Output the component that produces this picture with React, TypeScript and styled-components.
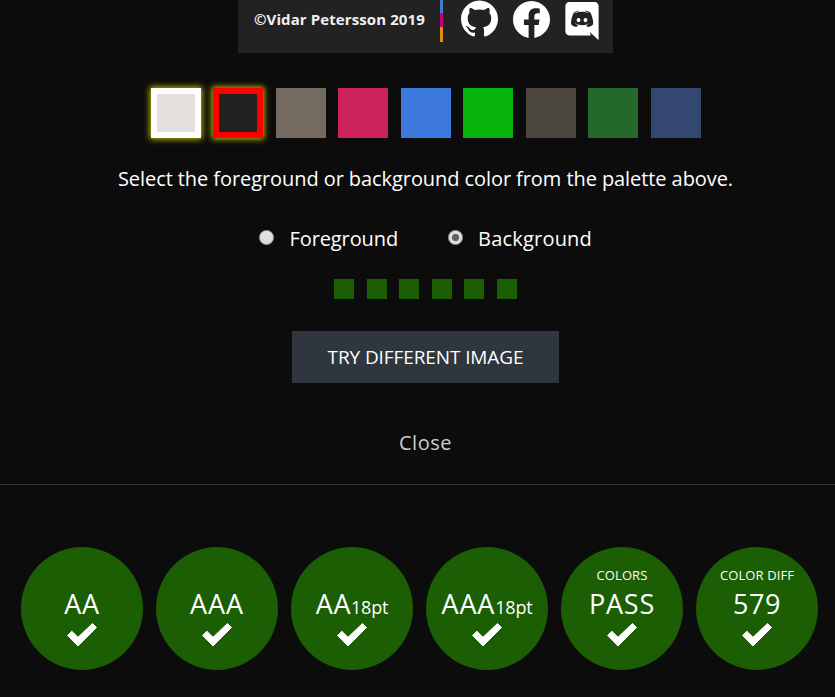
import React from "react";
import styled, { createGlobalStyle } from "styled-components";

const GlobalStyle = createGlobalStyle`
  * { box-sizing: border-box; }
  body {
    margin: 0;
    background: #0c0c0c;
    color: #fff;
    font-family: "Open Sans", "Noto Sans", sans-serif;
    overflow: hidden;
  }
`;

const Page = styled.main`
  width: 835px;
  height: 697px;
  overflow: hidden;
`;

const Panel = styled.section`
  width: 851px;
  height: 485px;
  display: flex;
  flex-direction: column;
  align-items: center;
  border-bottom: 1px solid #30373d;
`;

const Preview = styled.div`
  width: 375px;
  height: 53px;
  flex: none;
  display: flex;
  align-items: flex-start;
  padding-left: 16px;
  background: #222;
`;

const Copyright = styled.span`
  width: 186px;
  padding-top: 9px;
  font-size: 15px;
  line-height: 20px;
  font-weight: 700;
  letter-spacing: 0.1px;
  white-space: nowrap;
  color: #f0f0f0;
`;

const Stripe = styled.div`
  width: 3px;
  height: 42px;
  margin-right: 18px;
  background: linear-gradient(#4478c8 0 13px, #c9006b 13px 27px, #dc910c 27px);
`;

const SocialIcon = styled.svg<{ $w: number; $h: number; $top: number; $gap: number }>`
  width: ${(p) => p.$w}px;
  height: ${(p) => p.$h}px;
  margin: ${(p) => p.$top}px ${(p) => p.$gap}px 0 0;
  flex: none;
  fill: #fff;
`;

const Palette = styled.div`
  display: flex;
  gap: 12.5px;
  margin-top: 35px;
`;

const Swatch = styled.button<{ $color: string; $ring?: string }>`
  width: 50px;
  height: 50px;
  padding: 0;
  background: ${(p) => p.$color};
  border: ${(p) => (p.$ring ? `6px solid ${p.$ring}` : "0")};
  box-shadow: ${(p) => (p.$ring ? "0 0 6px 1px #c8c800" : "none")};
`;

const Hint = styled.p`
  margin: 26px 0 0;
  font-size: 20px;
  line-height: 30px;
  letter-spacing: -0.075px;
  white-space: nowrap;
`;

const Choices = styled.div`
  display: flex;
  width: 333px;
  height: 30px;
  margin-top: 30px;
  justify-content: space-between;
`;

const Choice = styled.label<{ $ls: number }>`
  display: flex;
  align-items: center;
  gap: 15.5px;
  font-size: 20px;
  line-height: 30px;
  letter-spacing: ${(p) => p.$ls}px;
`;

const Radio = styled.span<{ $on?: boolean }>`
  width: 15px;
  height: 15px;
  margin-bottom: 3px;
  border-radius: 50%;
  border: 1px solid #a3a3a3;
  background: ${(p) =>
    p.$on ? "radial-gradient(circle, #606060 0 3.2px, #dedede 4px)" : "linear-gradient(#e6e6e6, #dadada)"};
`;

const Dots = styled.div`
  display: flex;
  gap: 12.5px;
  margin-top: 25px;
`;

const Dot = styled.span`
  width: 20px;
  height: 20px;
  background: #1b5e04;
`;

const ImageButton = styled.button`
  width: 267px;
  height: 52px;
  margin-top: 32px;
  padding: 0;
  border: 0;
  background: #2f363d;
  color: #fff;
  font: 19px/52px "Open Sans", sans-serif;
  letter-spacing: -0.1px;
`;

const Close = styled.a`
  margin-top: 45px;
  font-size: 20px;
  line-height: 30px;
  letter-spacing: 0.5px;
  color: #ccc;
`;

const Results = styled.section`
  display: flex;
  gap: 13px;
  padding: 62px 0 0 21px;
`;

const Circle = styled.div`
  width: 122px;
  height: 123px;
  flex: none;
  border-radius: 50%;
  background: #1b5e04;
  display: flex;
  flex-direction: column;
  align-items: center;
`;

const Caption = styled.span`
  height: 19px;
  margin-top: 19px;
  font-size: 13px;
  line-height: 19px;
  letter-spacing: 0.1px;
  white-space: nowrap;
`;

const Score = styled.span<{ $ls: number }>`
  height: 36px;
  font-size: 27px;
  line-height: 38px;
  white-space: nowrap;
  letter-spacing: ${(p) => p.$ls}px;
`;

const Size = styled.small`
  font-size: 18px;
  letter-spacing: -0.2px;
`;

const Check = styled.svg`
  width: 32px;
  height: 26px;
  margin: 1px 1px 0 0;
  fill: #fff;
  stroke: #fff;
  stroke-width: 1;
  stroke-linejoin: round;
`;

const swatches = [
  { color: "#e4e0dd", ring: "#fff" },
  { color: "#212121", ring: "#f00" },
  { color: "#746a60" },
  { color: "#cc235e" },
  { color: "#3d78dc" },
  { color: "#06b30a" },
  { color: "#4b463f" },
  { color: "#24682b" },
  { color: "#344770" },
];

const results = [
  { score: "AA", ls: 0.8 },
  { score: "AAA", ls: 1 },
  { score: "AA", size: "18pt", ls: 0.5 },
  { score: "AAA", size: "18pt", ls: 0.8 },
  { score: "PASS", caption: "COLORS", ls: 0.8 },
  { score: "579", caption: "COLOR DIFF", ls: 0.5 },
];

export default function App() {
  return (
    <>
      <GlobalStyle />
      <Page>
        <Panel>
          <Preview>
            <Copyright>©Vidar Petersson 2019</Copyright>
            <Stripe />
            <SocialIcon viewBox="0 0 24 24" $w={37} $h={37} $top={0} $gap={15}>
              <path d="M12 .297c-6.63 0-12 5.373-12 12 0 5.303 3.438 9.8 8.205 11.385.6.113.82-.258.82-.577 0-.285-.01-1.04-.015-2.04-3.338.724-4.042-1.61-4.042-1.61C4.422 18.07 3.633 17.7 3.633 17.7c-1.087-.744.084-.729.084-.729 1.205.084 1.838 1.236 1.838 1.236 1.07 1.835 2.809 1.305 3.495.998.108-.776.417-1.305.76-1.605-2.665-.3-5.466-1.332-5.466-5.93 0-1.31.465-2.38 1.235-3.22-.135-.303-.54-1.523.105-3.176 0 0 1.005-.322 3.3 1.23.96-.267 1.98-.399 3-.405 1.02.006 2.04.138 3 .405 2.28-1.552 3.285-1.23 3.285-1.23.645 1.653.24 2.873.12 3.176.765.84 1.23 1.91 1.23 3.22 0 4.61-2.805 5.625-5.475 5.92.42.36.81 1.096.81 2.22 0 1.606-.015 2.896-.015 3.286 0 .315.21.69.825.57C20.565 22.092 24 17.592 24 12.297c0-6.627-5.373-12-12-12" />
            </SocialIcon>
            <SocialIcon viewBox="0 0 24 24" $w={37} $h={37} $top={0.5} $gap={15}>
              <path d="M24 12.073c0-6.627-5.373-12-12-12s-12 5.373-12 12c0 5.99 4.388 10.954 10.125 11.854v-8.385H7.078v-3.47h3.047V9.43c0-3.007 1.792-4.669 4.533-4.669 1.312 0 2.686.235 2.686.235v2.953H15.83c-1.491 0-1.956.925-1.956 1.874v2.25h3.328l-.532 3.47h-2.796v8.385C19.612 23.027 24 18.062 24 12.073z" />
            </SocialIcon>
            <SocialIcon viewBox="0 0 448 512" $w={34} $h={38} $top={2} $gap={0}>
              <path d="M297.216 243.2c0 15.616-11.52 28.416-26.112 28.416-14.336 0-26.112-12.8-26.112-28.416s11.52-28.416 26.112-28.416c14.592 0 26.112 12.8 26.112 28.416zm-119.552-28.416c-14.592 0-26.112 12.8-26.112 28.416s11.776 28.416 26.112 28.416c14.592 0 26.112-12.8 26.112-28.416.256-15.616-11.52-28.416-26.112-28.416zM448 52.736V512c-64.494-56.994-43.868-38.128-118.784-107.776l13.568 47.36H52.48C23.552 451.584 0 428.032 0 398.848V52.736C0 23.552 23.552 0 52.48 0h343.04C424.448 0 448 23.552 448 52.736zm-72.96 242.688c0-82.432-36.864-149.248-36.864-149.248-36.864-27.648-71.936-26.88-71.936-26.88l-3.584 4.096c43.52 13.312 63.744 32.512 63.744 32.512-60.811-33.329-132.244-33.335-191.232-7.424-9.472 4.352-15.104 7.424-15.104 7.424s21.248-20.224 67.328-33.536l-2.56-3.072s-35.072-.768-71.936 26.88c0 0-36.864 66.816-36.864 149.248 0 0 21.504 37.12 78.08 38.912 0 0 9.472-11.52 17.152-21.248-32.512-9.728-44.8-30.208-44.8-30.208 3.766 2.636 9.976 6.053 10.496 6.4 43.21 24.198 104.588 32.126 159.744 8.96 8.96-3.328 18.944-8.192 29.44-15.104 0 0-12.8 20.992-46.336 30.464 7.68 9.728 16.896 20.736 16.896 20.736 56.576-1.792 78.336-38.912 78.336-38.912z" />
            </SocialIcon>
          </Preview>
          <Palette>
            {swatches.map((s) => (
              <Swatch key={s.color} $color={s.color} $ring={s.ring} />
            ))}
          </Palette>
          <Hint>Select the foreground or background color from the palette above.</Hint>
          <Choices>
            <Choice $ls={-0.1}>
              <Radio />
              Foreground
            </Choice>
            <Choice $ls={0.2}>
              <Radio $on />
              Background
            </Choice>
          </Choices>
          <Dots>
            {[0, 1, 2, 3, 4, 5].map((i) => (
              <Dot key={i} />
            ))}
          </Dots>
          <ImageButton>TRY DIFFERENT IMAGE</ImageButton>
          <Close>Close</Close>
        </Panel>
        <Results>
          {results.map((r, i) => (
            <Circle key={i}>
              <Caption>{r.caption}</Caption>
              <Score $ls={r.ls}>
                {r.score}
                {r.size && <Size>{r.size}</Size>}
              </Score>
              <Check viewBox="0 0 32 26">
                <path d="M26.5 1.5L30.5 5.5L12 24L1.6 13.4L5.8 9.2L12 15.3Z" />
              </Check>
            </Circle>
          ))}
        </Results>
      </Page>
    </>
  );
}
